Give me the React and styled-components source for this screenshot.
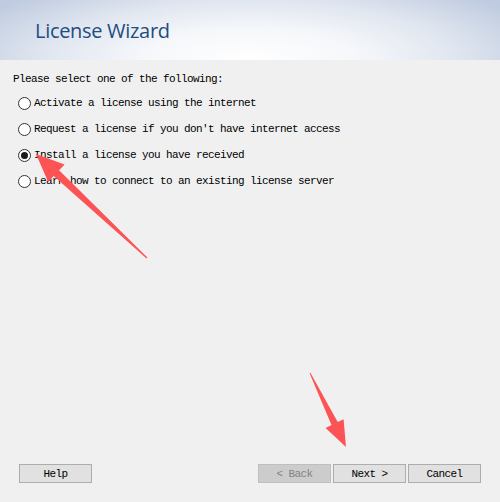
import React from 'react';
import styled, { createGlobalStyle } from 'styled-components';

const GlobalStyle = createGlobalStyle`
  html, body {
    margin: 0;
    padding: 0;
    background: #f0f0f0;
  }
`;

const Window = styled.div`
  position: relative;
  width: 500px;
  height: 502px;
  display: flex;
  flex-direction: column;
  background: #f0f0f0;
  overflow: hidden;
`;

const Header = styled.div`
  height: 60px;
  flex-shrink: 0;
  display: flex;
  align-items: center;
  padding-left: 35px;
  background: radial-gradient(ellipse 62% 150% at 50% 100%, #ffffff 0%, #f5f7fa 35%, #dfe5ef 68%, #bfcbe0 100%);
`;

const Title = styled.h1`
  margin: 0;
  font-family: "Open Sans", "Noto Sans", sans-serif;
  font-weight: 400;
  font-size: 20px;
  letter-spacing: -0.3px;
  color: #1d4d83;
`;

const Content = styled.div`
  flex: 1;
  padding: 13px 0 0 13px;
  font-family: "Liberation Mono", monospace;
  font-size: 11px;
  letter-spacing: -0.6px;
  color: #000;
`;

const Prompt = styled.div`
  height: 12px;
  line-height: 12px;
  margin-bottom: 11px;
`;

const Options = styled.div`
  display: flex;
  flex-direction: column;
  gap: 12px;
`;

const Option = styled.label`
  display: flex;
  align-items: center;
  height: 14px;
  line-height: 14px;
  white-space: nowrap;
`;

const Radio = styled.span`
  box-sizing: border-box;
  width: 13px;
  height: 13px;
  margin-left: 5px;
  margin-right: 3px;
  border-radius: 50%;
  border: 1px solid #333;
  background: #fff;
  display: flex;
  align-items: center;
  justify-content: center;

  &::after {
    content: "";
    width: 7px;
    height: 7px;
    border-radius: 50%;
    background: ${p => (p.$checked ? '#1a1a1a' : 'transparent')};
  }
`;

const Footer = styled.div`
  height: 19px;
  padding: 0 19px 19px 19px;
  display: flex;
  justify-content: space-between;
`;

const ButtonGroup = styled.div`
  display: flex;
  gap: 2px;
`;

const Button = styled.button`
  box-sizing: border-box;
  width: 73px;
  height: 19px;
  padding: 0;
  border: 1px solid ${p => (p.disabled ? '#bfbfbf' : '#adadad')};
  background: ${p => (p.disabled ? '#cccccc' : '#e1e1e1')};
  color: ${p => (p.disabled ? '#838383' : '#000')};
  font-family: "Liberation Mono", monospace;
  font-size: 11px;
  letter-spacing: -0.6px;
  cursor: default;
`;

const Annotations = styled.svg`
  position: absolute;
  left: 0;
  top: 0;
  pointer-events: none;
`;

const options = [
  'Activate a license using the internet',
  "Request a license if you don't have internet access",
  'Install a license you have received',
  'Learn how to connect to an existing license server',
];

const App = () => {
  return (
    <Window>
      <GlobalStyle />
      <Header>
        <Title>License Wizard</Title>
      </Header>
      <Content>
        <Prompt>Please select one of the following:</Prompt>
        <Options>
          {options.map((text, i) => (
            <Option key={text}>
              <Radio $checked={i === 2} />
              {text}
            </Option>
          ))}
        </Options>
      </Content>
      <Footer>
        <Button>Help</Button>
        <ButtonGroup>
          <Button disabled>&lt; Back</Button>
          <Button>Next &gt;</Button>
          <Button>Cancel</Button>
        </ButtonGroup>
      </Footer>
      <Annotations width="500" height="502" viewBox="0 0 500 502">
        <polygon
          fill="#fc5454"
          points="36,154 64.6,164.4 59.1,170.3 147.4,257.6 146.6,258.4 53.7,176.1 48.2,182"
        />
        <polygon
          fill="#fc5454"
          points="346,447 325.6,428 331.5,425.1 309.6,373.2 310.4,372.8 337.7,422.1 343.6,419.2"
        />
      </Annotations>
    </Window>
  );
};

export default App;
